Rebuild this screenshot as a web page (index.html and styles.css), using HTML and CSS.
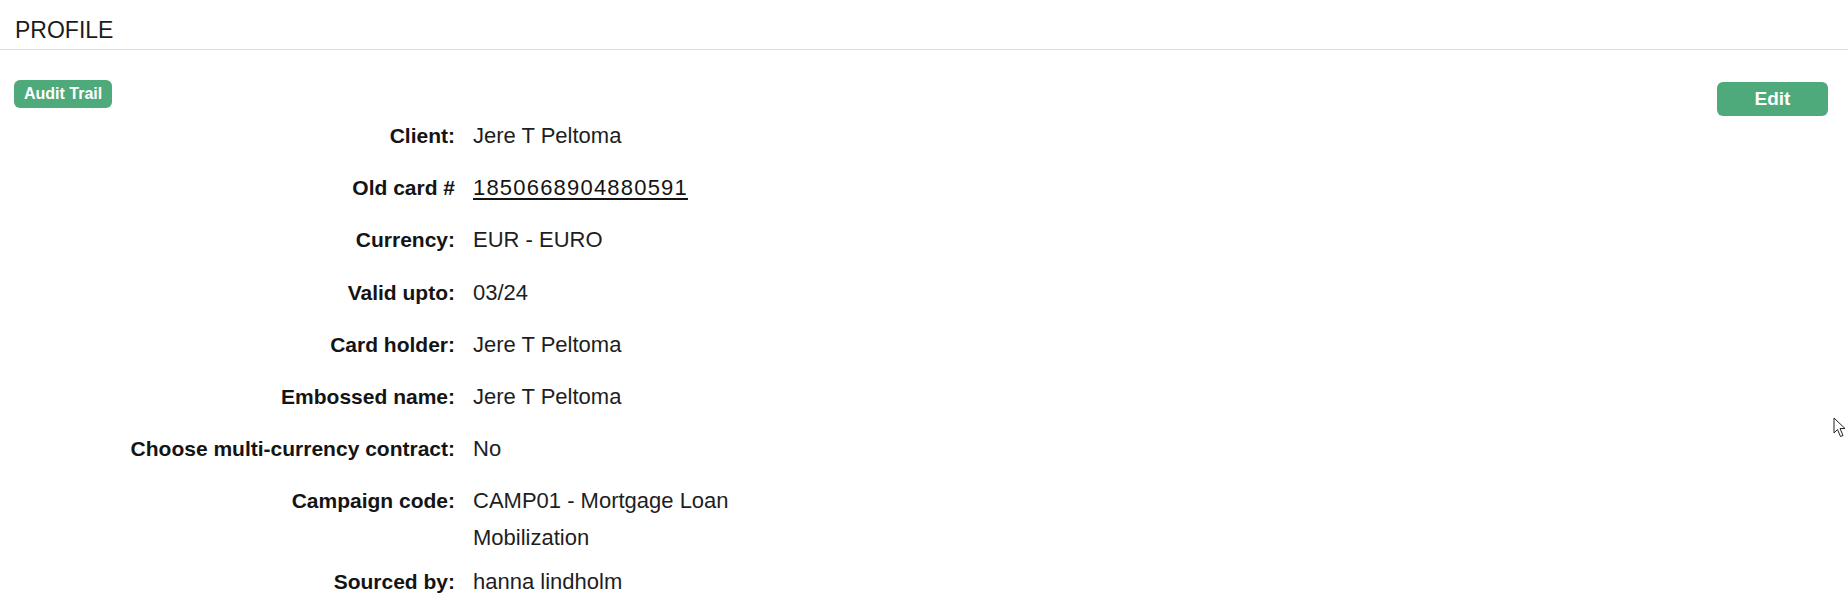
FILE: index.html
```html
<!DOCTYPE html>
<html lang="en">
<head>
    <meta charset="UTF-8">
    <title>Profile</title>
    <link rel="stylesheet" href="styles.css">
</head>
<body>
    <!-- Page header -->
    <header class="page-header">
        <h1 class="page-title">PROFILE</h1>
    </header>

    <main class="profile">
        <!-- Actions -->
        <div class="toolbar">
            <span class="badge">Audit Trail</span>
            <button class="btn-edit" type="button">Edit</button>
        </div>

        <!-- Details -->
        <dl class="details">
            <dt>Client:</dt>
            <dd>Jere T Peltoma</dd>

            <dt>Old card #</dt>
            <dd><a class="card-link" href="#">1850668904880591</a></dd>

            <dt>Currency:</dt>
            <dd>EUR - EURO</dd>

            <dt>Valid upto:</dt>
            <dd>03/24</dd>

            <dt>Card holder:</dt>
            <dd>Jere T Peltoma</dd>

            <dt>Embossed name:</dt>
            <dd>Jere T Peltoma</dd>

            <dt>Choose multi-currency contract:</dt>
            <dd>No</dd>

            <dt>Campaign code:</dt>
            <dd>CAMP01 - Mortgage Loan Mobilization</dd>

            <dt>Sourced by:</dt>
            <dd>hanna lindholm</dd>
        </dl>
    </main>

    <!-- Mouse pointer captured in the screenshot -->
    <svg class="pointer" width="14" height="21" viewBox="0 0 14 21">
        <path d="M1 1 L1 16 L4.5 12.5 L7.5 19.5 L10 18.5 L7 11.5 L12 11.5 Z"
              fill="#fff" stroke="#222" stroke-width="1" stroke-linejoin="round"/>
    </svg>
</body>
</html>
```

FILE: styles.css
```css
/* ====== Base ====== */
body {
    margin: 0;
    background: #fff;
    color: #1a1a1a;
    font-family: 'Liberation Sans', Arial, sans-serif;
}

/* ====== Header ====== */
.page-header {
    padding: 15px 15px 4px 15px;
    border-bottom: 1px solid #dedede;
}
.page-title {
    margin: 0;
    font-size: 23px;
    font-weight: 400;
    line-height: 30px;
    color: #1c1c1c;
}

/* ====== Content ====== */
.profile {
    padding: 30px 20px 0 14px;
}
.toolbar {
    display: flex;
    justify-content: space-between;
    align-items: flex-start;
    height: 28px;
}
.badge {
    display: inline-block;
    height: 28px;
    line-height: 28px;
    padding: 0 10px;
    border-radius: 6px;
    background: #4ea97b;
    color: #fff;
    font-size: 16px;
    font-weight: 700;
}
.btn-edit {
    margin-top: 2px;
    width: 111px;
    height: 34px;
    border: none;
    border-radius: 6px;
    background: #4ea97b;
    color: #fff;
    font-family: inherit;
    font-size: 19px;
    font-weight: 700;
    cursor: pointer;
}

/* ====== Details grid ====== */
.details {
    display: grid;
    grid-template-columns: 441px 300px;
    column-gap: 18px;
    align-items: baseline;
    margin: 2px 0 0 0;
}
.details dt {
    text-align: right;
    font-size: 21px;
    font-weight: 700;
    line-height: 52.2px;
    color: #141414;
}
.details dd {
    margin: 0;
    font-size: 22px;
    line-height: 37px;
    color: #1e1e1e;
}
.card-link {
    color: #141414;
    text-decoration: underline;
    text-underline-offset: 3px;
    letter-spacing: 1.2px;
}

/* ====== Pointer overlay ====== */
.pointer {
    position: absolute;
    left: 1833px;
    top: 417px;
}
```
